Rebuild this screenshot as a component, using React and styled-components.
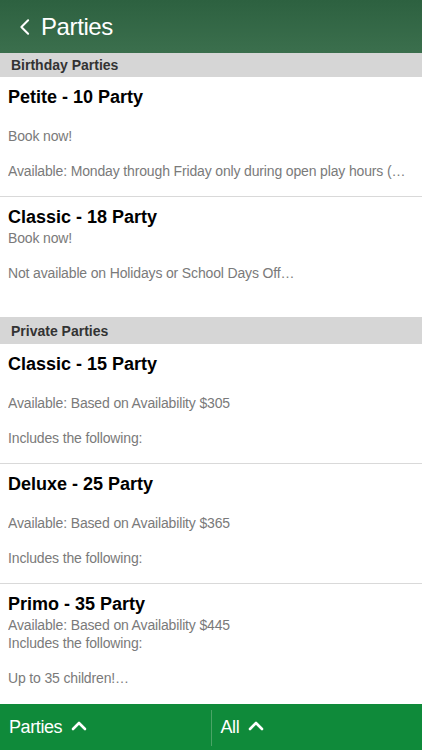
import React from 'react';
import styled, { createGlobalStyle } from 'styled-components';

const GlobalStyle = createGlobalStyle`
  html, body { margin: 0; padding: 0; background: #fff; }
  body { font-family: "Liberation Sans", Arial, sans-serif; }
`;

const sections = [
  {
    title: 'Birthday Parties',
    items: [
      { name: 'Petite - 10 Party', text: '\nBook now!\n\nAvailable: Monday through Friday only during open play hours (…' },
      { name: 'Classic - 18 Party', text: 'Book now!\n\nNot available on Holidays or School Days Off…' },
    ],
  },
  {
    title: 'Private Parties',
    items: [
      { name: 'Classic - 15 Party', text: '\nAvailable: Based on Availability $305\n\nIncludes the following:' },
      { name: 'Deluxe - 25 Party', text: '\nAvailable: Based on Availability $365\n\nIncludes the following:' },
      { name: 'Primo - 35 Party', text: 'Available: Based on Availability $445\nIncludes the following:\n\nUp to 35 children!…' },
    ],
  },
];

function Chevron({ dir = 'left', size = 14 }) {
  const d = dir === 'left' ? 'M9 2 L3 8 L9 14' : 'M2 10 L8 4 L14 10';
  return (
    <svg width={size} height={size} viewBox="0 0 16 16" fill="none">
      <path d={d} stroke="#fff" strokeWidth={dir === 'left' ? 1.8 : 2.6} strokeLinecap="round" strokeLinejoin="round" />
    </svg>
  );
}

function App() {
  return (
    <Screen>
      <GlobalStyle />
      <NavBar>
        <BackIcon>
          <Chevron dir="left" size={18} />
        </BackIcon>
        <NavTitle>Parties</NavTitle>
      </NavBar>
      <List>
        {sections.map(section => (
          <React.Fragment key={section.title}>
            <SectionHeader>{section.title}</SectionHeader>
            {section.items.map((item, i) => (
              <Row key={item.name} $last={i === section.items.length - 1}>
                <RowTitle>{item.name}</RowTitle>
                <RowText>
                  {item.text.split('\n').map((line, j) => (
                    <TextLine key={j}>{line || '\u00a0'}</TextLine>
                  ))}
                </RowText>
              </Row>
            ))}
          </React.Fragment>
        ))}
      </List>
      <TabBar>
        <TabButton>
          Parties <Chevron dir="up" size={16} />
        </TabButton>
        <TabDivider />
        <TabButton>
          All <Chevron dir="up" size={16} />
        </TabButton>
      </TabBar>
    </Screen>
  );
}

const Screen = styled.div`
  width: 422px;
  height: 750px;
  display: flex;
  flex-direction: column;
  overflow: hidden;
`;

const NavBar = styled.header`
  height: 53px;
  flex-shrink: 0;
  display: flex;
  align-items: center;
  padding-left: 18px;
  gap: 5px;
  background: linear-gradient(to bottom, #2d6140, #3b6f4d);
`;

const BackIcon = styled.span`
  display: flex;
  margin-top: 1px;
`;

const NavTitle = styled.h1`
  margin: 0;
  color: #fff;
  font-size: 24px;
  font-weight: 400;
  letter-spacing: -0.4px;
`;

const List = styled.div`
  flex: 1;
  overflow: hidden;
`;

const SectionHeader = styled.div`
  height: 24px;
  background: #d6d6d6;
  display: flex;
  align-items: center;
  padding-left: 11px;
  font-size: 14px;
  font-weight: 700;
  color: #333;
  box-sizing: border-box;
  &:not(:first-child) {
    height: 27px;
  }
`;

const Row = styled.div`
  height: 120px;
  box-sizing: border-box;
  padding: 9px 8px 0;
  border-bottom: ${p => (p.$last ? 'none' : '1px solid #d9d9d9')};
  overflow: hidden;
`;

const RowTitle = styled.div`
  font-size: 18px;
  font-weight: 700;
  line-height: 22px;
  color: #000;
`;

const RowText = styled.div`
  margin-top: 2px;
  font-size: 14px;
  line-height: 17.5px;
  color: #7a7a7a;
  letter-spacing: -0.15px;
`;

const TextLine = styled.div`
  white-space: nowrap;
  overflow: hidden;
  text-overflow: clip;
`;

const TabBar = styled.nav`
  height: 46px;
  flex-shrink: 0;
  background: #0f8a3a;
  display: flex;
  align-items: center;
`;

const TabButton = styled.div`
  flex: 1;
  display: flex;
  align-items: center;
  gap: 9px;
  padding-left: 9px;
  color: #fff;
  font-size: 18px;
  height: 100%;
  letter-spacing: -0.4px;
`;

const TabDivider = styled.div`
  width: 1px;
  height: 36px;
  align-self: flex-end;
  margin-bottom: 4px;
  background: #4aa466;
`;

export default App;
